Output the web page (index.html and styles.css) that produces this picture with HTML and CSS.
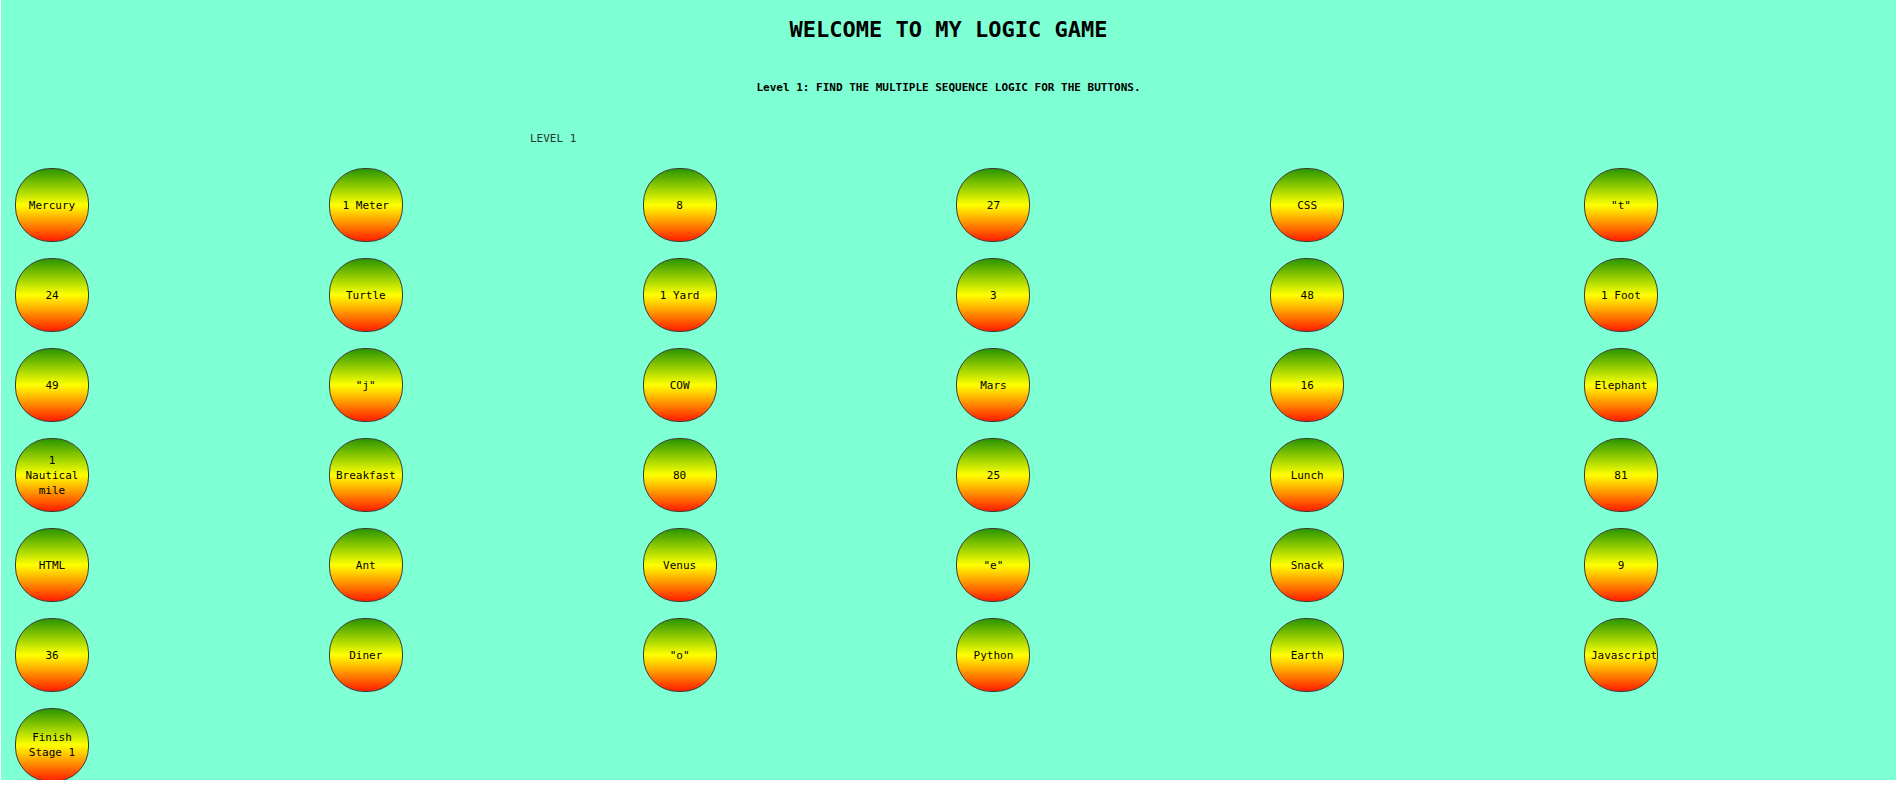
FILE: index.html
```html
<!DOCTYPE html>
<html lang="en">
<head>
<meta charset="utf-8">
<title>Logic Game</title>
<link rel="stylesheet" href="styles.css">
</head>
<body>
<div class="page">
  <h1 class="title">WELCOME TO MY LOGIC GAME</h1>
  <h5 class="subtitle">Level 1: FIND THE MULTIPLE SEQUENCE LOGIC FOR THE BUTTONS.</h5>
  <div class="level">LEVEL 1</div>
  <div class="grid">
    <button class="ball">Mercury</button>
    <button class="ball">1 Meter</button>
    <button class="ball">8</button>
    <button class="ball">27</button>
    <button class="ball">CSS</button>
    <button class="ball">"t"</button>

    <button class="ball">24</button>
    <button class="ball">Turtle</button>
    <button class="ball">1 Yard</button>
    <button class="ball">3</button>
    <button class="ball">48</button>
    <button class="ball">1 Foot</button>

    <button class="ball">49</button>
    <button class="ball">"j"</button>
    <button class="ball">COW</button>
    <button class="ball">Mars</button>
    <button class="ball">16</button>
    <button class="ball">Elephant</button>

    <button class="ball">1 Nautical mile</button>
    <button class="ball">Breakfast</button>
    <button class="ball">80</button>
    <button class="ball">25</button>
    <button class="ball">Lunch</button>
    <button class="ball">81</button>

    <button class="ball">HTML</button>
    <button class="ball">Ant</button>
    <button class="ball">Venus</button>
    <button class="ball">"e"</button>
    <button class="ball">Snack</button>
    <button class="ball">9</button>

    <button class="ball">36</button>
    <button class="ball">Diner</button>
    <button class="ball">"o"</button>
    <button class="ball">Python</button>
    <button class="ball">Earth</button>
    <button class="ball">Javascript</button>

    <button class="ball">Finish Stage 1</button>
  </div>
</div>
</body>
</html>
```

FILE: styles.css
```css
html, body {
  margin: 0;
  padding: 0;
  background: #ffffff;
}

.page {
  margin: 0 1px;
  height: 780px;
  overflow: hidden;
  background: #7fffd4;
  padding-top: 17px;
  box-sizing: border-box;
  font-family: "DejaVu Sans Mono", "Liberation Mono", monospace;
  color: #000;
}

.title {
  margin: 0;
  text-align: center;
  font-size: 22px;
  line-height: 26px;
  font-weight: bold;
}

.subtitle {
  margin: 38px 0 0;
  text-align: center;
  font-size: 11px;
  line-height: 13px;
  font-weight: bold;
}

.level {
  margin: 38px 0 0;
  padding-left: 529px;
  font-size: 11px;
  line-height: 13px;
  color: #1f3a33;
}

.grid {
  margin-top: 23px;
  padding-left: 14px;
  display: grid;
  grid-template-columns: repeat(6, 313.8px);
  row-gap: 16px;
}

.ball {
  justify-self: start;
  width: 74px;
  height: 74px;
  box-sizing: border-box;
  padding: 1px 6px;
  border: 1px solid #3c3c34;
  border-radius: 35px;
  background: linear-gradient(to bottom, #2a9500 0%, #b8e000 34%, #ffff00 50%, #ffa800 70%, #ff1c00 100%);
  font-family: "DejaVu Sans Mono", "Liberation Mono", monospace;
  font-size: 11px;
  line-height: 15px;
  color: #000;
  text-align: center;
  cursor: pointer;
}
```
